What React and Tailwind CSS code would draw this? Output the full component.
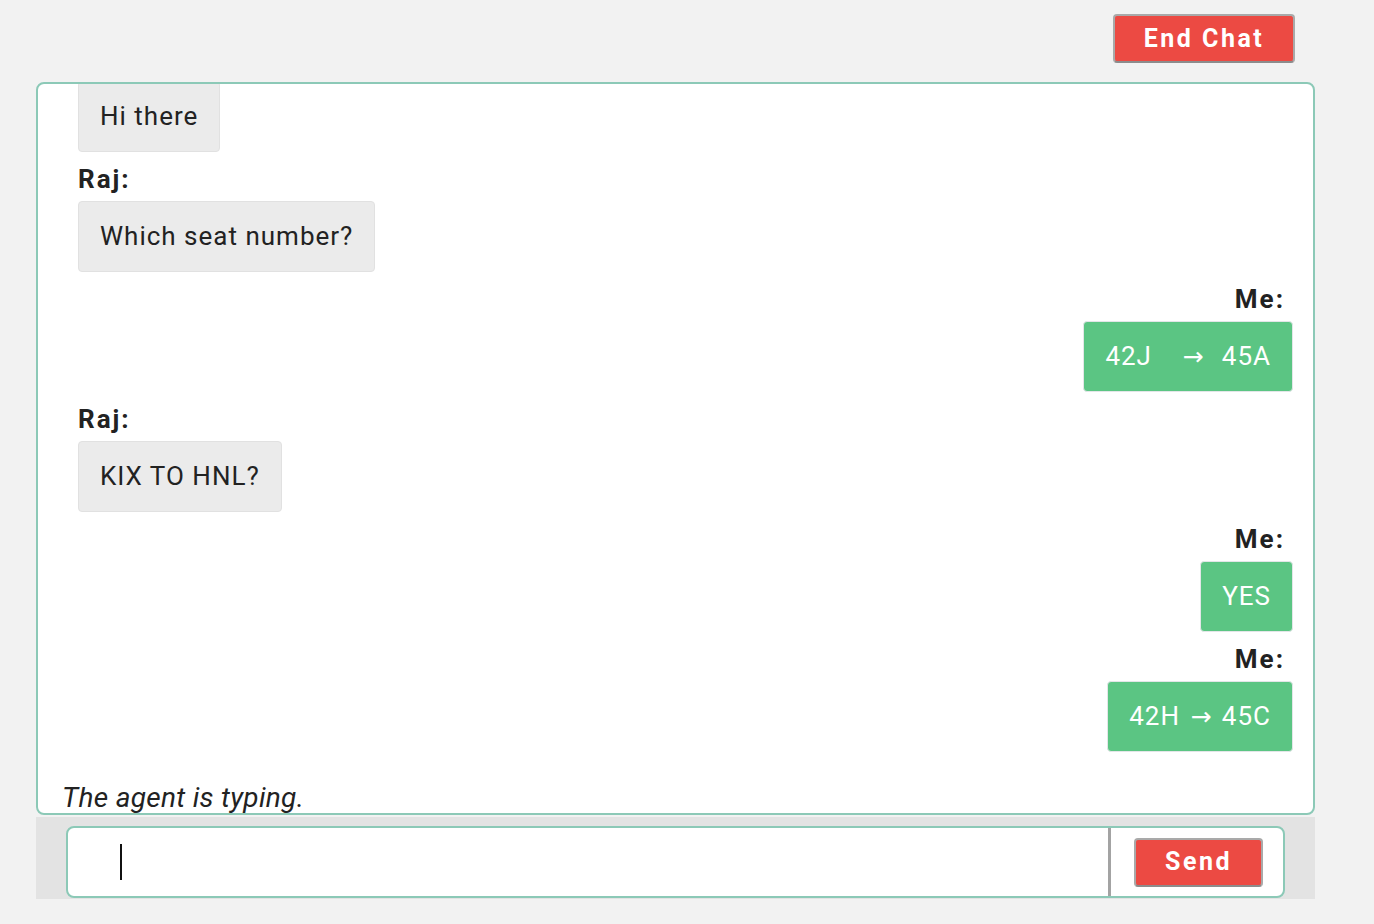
import React from "react";

const font = { fontFamily: "Roboto, 'Liberation Sans', sans-serif" };

function Label({ children, right }) {
  return (
    <div
      className={`mt-[12px] h-[30px] leading-[30px] text-[26px] font-bold tracking-[2px] text-[#222222] ${
        right ? "self-end pr-[8px]" : "self-start"
      }`}
    >
      {children}
    </div>
  );
}

function Bubble({ children, right }) {
  return (
    <div
      className={`mt-[7px] rounded-[4px] border px-[21px] py-[17px] leading-[35px] text-[26px] tracking-[1px] whitespace-pre ${
        right
          ? "self-end bg-[#5bc583] border-[#e3e6e8] text-white"
          : "self-start bg-[#ebebeb] border-[#e1e1e1] text-[#222222]"
      }`}
    >
      {children}
    </div>
  );
}

function Arrow() {
  return (
    <span className="inline-block px-[3px] text-[25px] tracking-normal" style={{ fontFamily: "'DejaVu Sans', sans-serif" }}>
      →
    </span>
  );
}

export default function App() {
  return (
    <div className="min-h-screen bg-[#f2f2f2]" style={font}>
      <div className="ml-[36px] w-[1279px]">
        <div className="flex justify-end pt-[14px] pr-[20px]">
          <button className="h-[49px] w-[182px] rounded-[4px] border-2 border-[#a9a9a9] border-b-[#8c8c8c] bg-[#ec4a43] text-[25px] font-bold tracking-[2.5px] text-white">
            End Chat
          </button>
        </div>
        <div className="mt-[19px] flex h-[733px] flex-col rounded-[8px] border-2 border-[#8cc9b7] bg-white">
          <div className="flex flex-1 flex-col justify-end overflow-hidden pl-[40px] pr-[20px] pb-[31px]">
            <Bubble>Hi there</Bubble>
            <Label>Raj:</Label>
            <Bubble>Which seat number?</Bubble>
            <Label right>Me:</Label>
            <Bubble right>
              42J<span className="inline-block w-[20px]"></span> <Arrow /><span className="inline-block w-[8px]"></span> 45A
            </Bubble>
            <Label>Raj:</Label>
            <Bubble>KIX TO HNL?</Bubble>
            <Label right>Me:</Label>
            <Bubble right>YES</Bubble>
            <Label right>Me:</Label>
            <Bubble right>
              42H <Arrow /> 45C
            </Bubble>
          </div>
          <div className="h-[30px] pl-[24px] pb-[1px] text-[28px] italic leading-[30px] tracking-[0.3px] text-[#222222]">
            The agent is typing.
          </div>
        </div>
        <div className="mt-[2px] h-[82px] bg-[#e3e3e3] px-[30px] pt-[9px] pb-[1px]">
          <div className="flex h-[72px] items-stretch overflow-hidden rounded-[8px] border-2 border-[#8cc9b7] bg-white">
            <div className="flex flex-1 items-center pl-[52px]">
              <div className="h-[36px] w-[2px] bg-[#111111]"></div>
            </div>
            <div className="w-[3px] bg-[#a3a3a3]"></div>
            <div className="flex items-center pl-[23px] pr-[20px]">
              <button className="h-[49px] w-[129px] rounded-[4px] border-2 border-[#a9a9a9] border-b-[#8c8c8c] bg-[#ec4a43] text-[25px] font-bold tracking-[2.5px] text-white">
                Send
              </button>
            </div>
          </div>
        </div>
      </div>
    </div>
  );
}
